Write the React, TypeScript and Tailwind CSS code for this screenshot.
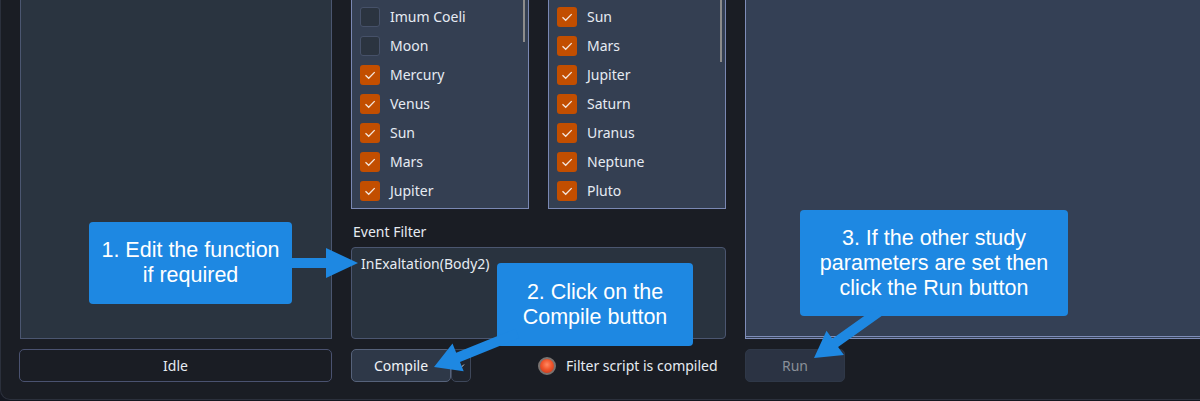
import React from "react";

const list1: [string, boolean][] = [
  ["Imum Coeli", false],
  ["Moon", false],
  ["Mercury", true],
  ["Venus", true],
  ["Sun", true],
  ["Mars", true],
  ["Jupiter", true],
];

const list2: [string, boolean][] = [
  ["Sun", true],
  ["Mars", true],
  ["Jupiter", true],
  ["Saturn", true],
  ["Uranus", true],
  ["Neptune", true],
  ["Pluto", true],
];

function Row({ label, checked }: { label: string; checked: boolean }) {
  return (
    <div className="flex h-[29px] items-center gap-[10px]">
      {checked ? (
        <span className="flex h-5 w-5 items-center justify-center rounded-[3px] bg-[#c24e00]">
          <svg width="20" height="20" viewBox="0 0 20 20">
            <path d="M5.5 10.2l3.2 3.1 6-6.2" fill="none" stroke="#f4e6dc" strokeWidth="1.3" />
          </svg>
        </span>
      ) : (
        <span className="h-5 w-5 rounded-[3px] border border-[#465169] bg-[#2b3440]" />
      )}
      <span className="text-[14px] leading-5 text-[#e6ebf2]">{label}</span>
    </div>
  );
}

function BodyList({ items, thumb }: { items: [string, boolean][]; thumb: string }) {
  return (
    <div className="relative h-[209px] w-[178px] overflow-hidden border border-t-0 border-[#7a88b3] bg-[#343f52] pl-[8px] pt-[2px]">
      {items.map(([label, checked]) => (
        <Row key={label} label={label} checked={checked} />
      ))}
      <div className={"absolute right-[3px] top-0 w-[2px] bg-[#8c8c8c] " + thumb} />
    </div>
  );
}

function Callout({ className, lines }: { className: string; lines: string[] }) {
  return (
    <div
      className={
        "absolute flex flex-col items-center justify-center rounded-[4px] bg-[#1e88e2] text-center font-['Liberation_Sans',Arial,sans-serif] text-[21.5px] leading-[25px] text-white " +
        className
      }
    >
      {lines.map((l) => (
        <div key={l}>{l}</div>
      ))}
    </div>
  );
}

export default function App() {
  return (
    <div className="h-[401px] w-[1200px] overflow-hidden bg-[#141720] font-['Noto_Sans','Liberation_Sans',sans-serif]">
      <div className="relative h-[400px] rounded-bl-[10px] border-b border-l border-[#2b303c] bg-[#1a1d24]">
        <div className="flex h-full gap-[19px] pb-[17px] pl-[18px]">
          {/* left column */}
          <div className="flex w-[313px] flex-col">
            <div className="ml-px flex-1 border border-t-0 border-[#4b5670] bg-[#2a3440]" />
            <button className="mt-[10px] h-[33px] rounded-[5px] border border-[#4a5270] text-[14px] text-[#e6ebf2]">
              Idle
            </button>
          </div>

          {/* middle column */}
          <div className="flex w-[375px] flex-col">
            <div className="flex gap-[19px]">
              <BodyList items={list1} thumb="h-[42px]" />
              <BodyList items={list2} thumb="h-[62px]" />
            </div>
            <div className="mt-[13px] mb-[5px] h-5 pl-[2px] text-[14px] leading-5 text-[#e6ebf2]">Event Filter</div>
            <div className="flex-1 rounded-[4px] border border-[#4b5670] bg-[#29333f] px-[9px] pt-[6px] text-[14px] leading-5 text-[#e6ebf2]">
              InExaltation(Body2)
            </div>
            <div className="mt-[10px] flex h-[33px] items-center">
              <button className="h-full w-[100px] rounded-[5px] border border-[#56627a] bg-[#2e3848] text-[14px] text-[#f0f3f7]">
                Compile
              </button>
              <button className="flex h-full w-[20px] items-center justify-center rounded-[5px] border border-[#3e475a] bg-[#1f242d]">
                <svg width="10" height="10" viewBox="0 0 10 10">
                  <path d="M2 3.5l3 3 3-3" fill="none" stroke="#c9ced6" strokeWidth="1" />
                </svg>
              </button>
              <span className="ml-[67px] h-[18px] w-[18px] rounded-full border-[2px] border-[#7a7370] bg-[radial-gradient(circle_at_50%_40%,#ff8a63_0%,#f0552b_45%,#b8321a_100%)]" />
              <span className="ml-[10px] text-[14px] text-[#e6ebf2]">Filter script is compiled</span>
            </div>
          </div>

          {/* right column */}
          <div className="flex flex-1 flex-col">
            <div className="flex-1 border-b-[3px] border-l border-double border-[#7f8db8] bg-[#344055]" />
            <button className="mt-[10px] h-[33px] w-[100px] rounded-[5px] border border-[#2f3848] bg-[#2b3343] text-[14px] text-[#8a9099]">
              Run
            </button>
          </div>
        </div>

        {/* annotations */}
        <Callout className="left-[88px] top-[222px] h-[82px] w-[203px]" lines={["1. Edit the function", "if required"]} />
        <Callout className="left-[496px] top-[263px] h-[83px] w-[196px]" lines={["2. Click on the", "Compile button"]} />
        <Callout
          className="left-[799px] top-[210px] h-[106px] w-[268px]"
          lines={["3. If the other study", "parameters are set then", "click the Run button"]}
        />
        <svg className="pointer-events-none absolute left-0 top-0" width="1200" height="400">
          <polygon fill="#1e88e2" points="285,258 325,258 325,248 357,263 325,278 325,268 285,268" />
          <polygon
            fill="#1e88e2"
            points="433,367 451.5,343.4 455.2,352.7 514.5,328.7 518.3,337.9 459,361.9 462.7,371.2"
          />
          <polygon
            fill="#1e88e2"
            points="813,358 825.5,330.7 831.3,338.8 879.4,304.6 885.2,312.8 837.1,347 842.9,355.1"
          />
        </svg>
      </div>
    </div>
  );
}
